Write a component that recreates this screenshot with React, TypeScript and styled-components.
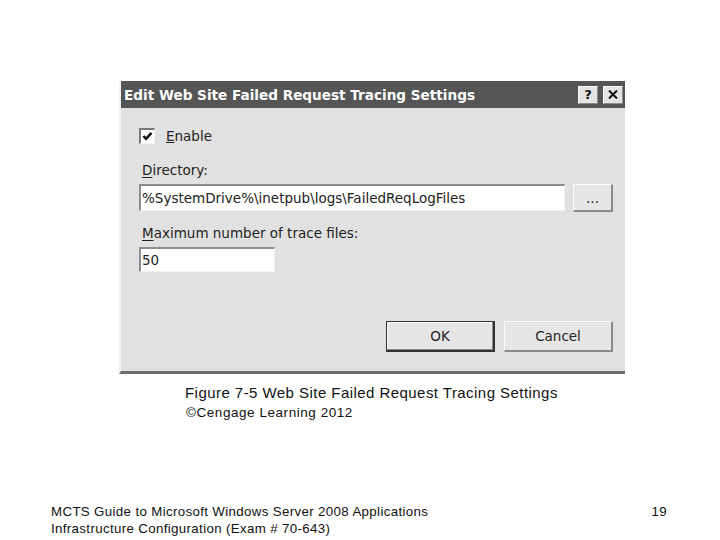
import React from "react";
import styled, { createGlobalStyle } from "styled-components";

const Global = createGlobalStyle`
  html, body { margin: 0; padding: 0; background: #ffffff; }
  #root { width: 720px; height: 540px; }
`;

const Slide = styled.div`
  width: 720px;
  height: 540px;
  box-sizing: border-box;
  padding-top: 81px;
  display: flex;
  flex-direction: column;
  background: #ffffff;
  font-family: "Liberation Sans", Arial, sans-serif;
`;

const Dialog = styled.div`
  margin-left: 119px;
  width: 506px;
  height: 293px;
  box-sizing: border-box;
  border-left: 2px solid #f2f2f2;
  border-bottom: 3px solid #6e6e6e;
  background: #e1e1e1;
  display: flex;
  flex-direction: column;
  font-family: "DejaVu Sans", Verdana, sans-serif;
`;

const TitleBar = styled.div`
  height: 27px;
  background: #555555;
  display: flex;
  align-items: center;
  padding-left: 3px;
  padding-right: 2px;
`;

const Title = styled.div`
  flex: 1;
  color: #ffffff;
  font-weight: bold;
  font-size: 13.6px;
  white-space: nowrap;
`;

const CapButton = styled.div<{ $gap?: number }>`
  width: 20px;
  height: 18px;
  margin-left: ${(p) => p.$gap ?? 0}px;
  box-sizing: border-box;
  background: #e4e4e4;
  border-top: 1px solid #fafafa;
  border-left: 1px solid #fafafa;
  border-right: 1px solid #8a8a8a;
  border-bottom: 1px solid #8a8a8a;
  display: flex;
  align-items: center;
  justify-content: center;
  color: #111;
  font-weight: bold;
  font-size: 13px;
  font-family: "DejaVu Sans", sans-serif;
`;

const Body = styled.div`
  flex: 1;
  display: flex;
  flex-direction: column;
  padding: 20px 12px 0 18px;
  font-size: 13.5px;
  color: #222;
`;

const CheckRow = styled.label`
  display: flex;
  align-items: center;
  height: 16px;
  gap: 11px;
`;

const CheckBox = styled.div`
  width: 16px;
  height: 16px;
  box-sizing: border-box;
  background: #ffffff;
  border-top: 2px solid #777;
  border-left: 2px solid #777;
  border-right: 1px solid #f4f4f4;
  border-bottom: 1px solid #f4f4f4;
  display: flex;
  align-items: center;
  justify-content: center;
`;

const Label = styled.div<{ $top: number }>`
  margin-top: ${(p) => p.$top}px;
  padding-left: 3px;
  line-height: 16px;
  u { text-decoration: underline; text-underline-offset: 2px; }
`;

const FieldRow = styled.div<{ $top: number }>`
  margin-top: ${(p) => p.$top}px;
  display: flex;
  align-items: flex-start;
  gap: 8px;
`;

const Input = styled.div<{ $w: number; $h: number }>`
  width: ${(p) => p.$w}px;
  height: ${(p) => p.$h}px;
  box-sizing: border-box;
  background: #ffffff;
  border-top: 2px solid #8c8c8c;
  border-left: 2px solid #8c8c8c;
  border-right: 1px solid #f0f0f0;
  border-bottom: 1px solid #f0f0f0;
  display: flex;
  align-items: center;
  padding-left: 1px;
  white-space: nowrap;
  color: #222;
`;

const Button = styled.div<{ $w: number; $h: number; $default?: boolean }>`
  width: ${(p) => p.$w}px;
  height: ${(p) => p.$h}px;
  flex-shrink: 0;
  box-sizing: border-box;
  background: #e6e6e6;
  border-top: 1px solid ${(p) => (p.$default ? "#333" : "#fbfbfb")};
  border-left: 1px solid ${(p) => (p.$default ? "#333" : "#fbfbfb")};
  border-right: 2px solid ${(p) => (p.$default ? "#333" : "#8a8a8a")};
  border-bottom: 2px solid ${(p) => (p.$default ? "#333" : "#8a8a8a")};
  box-shadow: ${(p) => (p.$default ? "inset -1px -1px 0 #8a8a8a, inset 1px 1px 0 #fbfbfb" : "none")};
  display: flex;
  align-items: center;
  justify-content: center;
  color: #222;
  font-size: 13.5px;
`;

const Footer = styled.div`
  margin-top: 49px;
  display: flex;
  gap: 9px;
  justify-content: flex-end;
`;

const Caption = styled.div`
  margin-left: 185px;
  margin-top: 10px;
  font-size: 15px;
  letter-spacing: 0.45px;
  line-height: 18px;
  color: #111;
`;

const Credit = styled.div`
  margin-left: 186px;
  margin-top: 3px;
  font-size: 13.5px;
  letter-spacing: 0.55px;
  line-height: 16px;
  color: #111;
`;

const SlideFooter = styled.div`
  margin-top: auto;
  margin-bottom: 3px;
  padding: 0 53px 0 51px;
  display: flex;
  justify-content: space-between;
  align-items: flex-start;
  font-size: 13.3px;
  letter-spacing: 0.35px;
  line-height: 17px;
  color: #111;
`;

const Check = () => (
  <svg width="11" height="11" viewBox="0 0 11 11">
    <path d="M1.5 5 L4 7.8 L9.5 1.8" stroke="#111" strokeWidth="2.6" fill="none" />
  </svg>
);

export default function App() {
  return (
    <>
      <Global />
      <Slide>
        <Dialog>
          <TitleBar>
            <Title>Edit Web Site Failed Request Tracing Settings</Title>
            <CapButton>?</CapButton>
            <CapButton $gap={5}>
              <svg width="10" height="9" viewBox="0 0 10 9">
                <path d="M1 0.5 L9 8.5 M9 0.5 L1 8.5" stroke="#111" strokeWidth="2" />
              </svg>
            </CapButton>
          </TitleBar>
          <Body>
            <CheckRow>
              <CheckBox>
                <Check />
              </CheckBox>
              <span>
                <u>E</u>nable
              </span>
            </CheckRow>
            <Label $top={18}>
              <u>D</u>irectory:
            </Label>
            <FieldRow $top={6}>
              <Input $w={428} $h={27}>%SystemDrive%\inetpub\logs\FailedReqLogFiles</Input>
              <Button $w={40} $h={28}>...</Button>
            </FieldRow>
            <Label $top={13}>
              <u>M</u>aximum number of trace files:
            </Label>
            <FieldRow $top={6}>
              <Input $w={136} $h={25}>50</Input>
            </FieldRow>
            <Footer>
              <Button $w={109} $h={31} $default>OK</Button>
              <Button $w={109} $h={31}>Cancel</Button>
            </Footer>
          </Body>
        </Dialog>
        <Caption>Figure 7-5 Web Site Failed Request Tracing Settings</Caption>
        <Credit>©Cengage Learning 2012</Credit>
        <SlideFooter>
          <div>
            MCTS Guide to Microsoft Windows Server 2008 Applications
            <br />
            Infrastructure Configuration (Exam # 70-643)
          </div>
          <div>19</div>
        </SlideFooter>
      </Slide>
    </>
  );
}
